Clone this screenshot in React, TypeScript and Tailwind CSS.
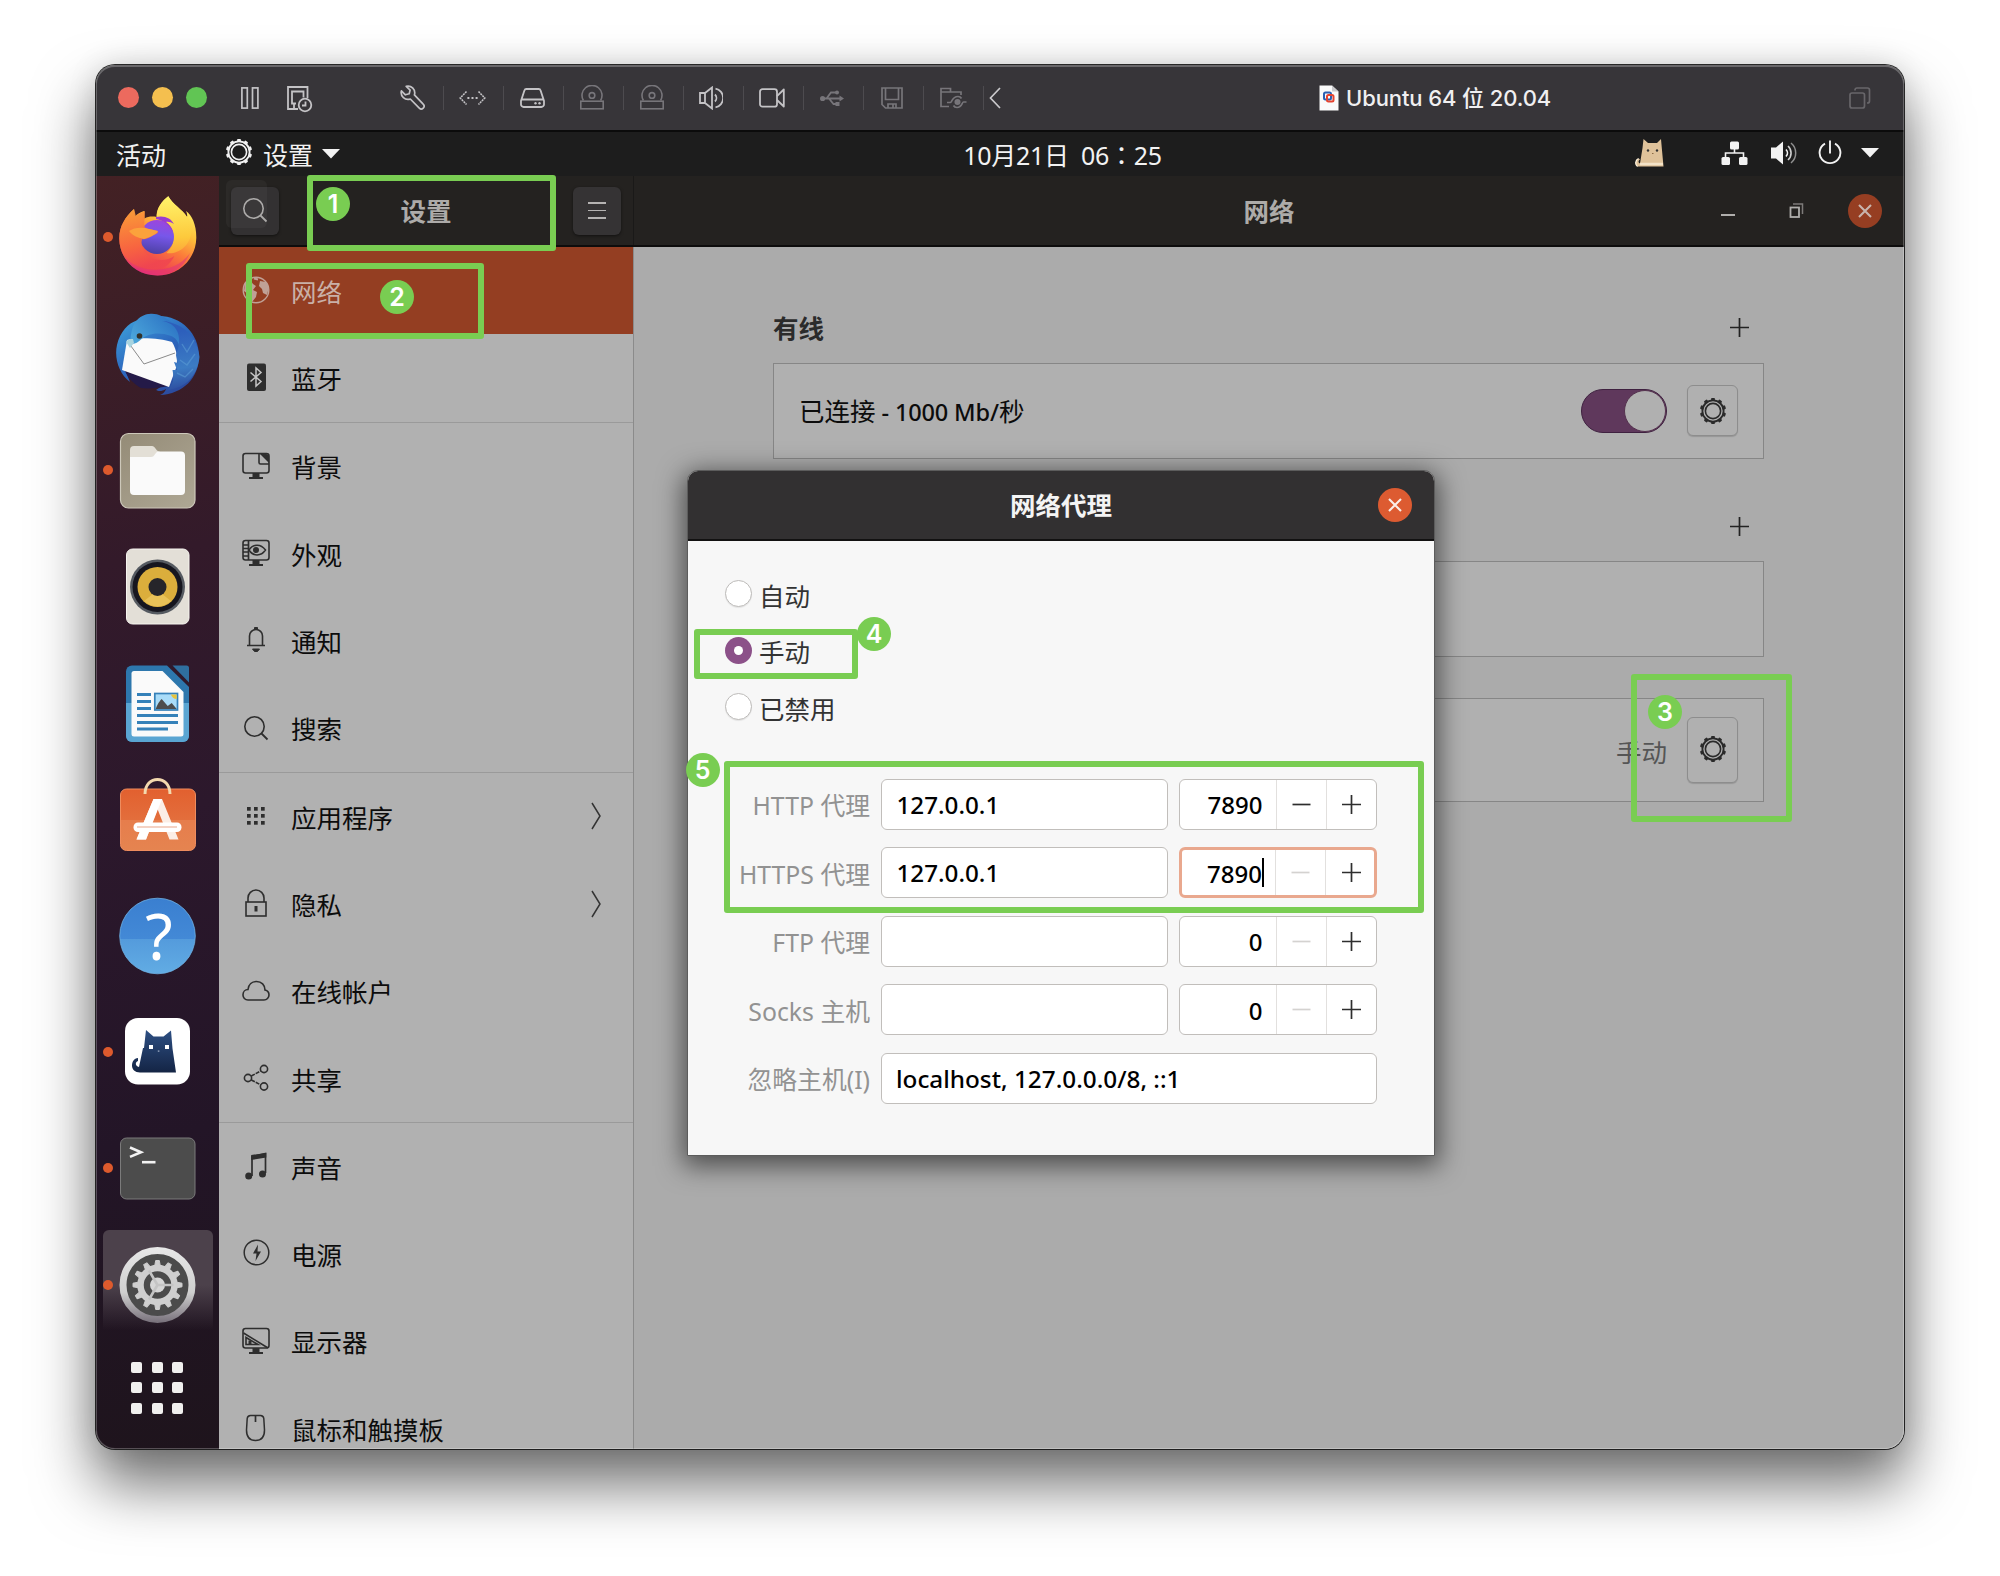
import React from 'react';

type SvgProps = { w: number; h: number; vb?: string; className?: string; children: React.ReactNode };

const Svg = ({ w, h, vb, className = '', children }: SvgProps) => (
  <svg width={w} height={h} viewBox={vb ?? `0 0 ${w} ${h}`} fill="none" className={`shrink-0 ${className}`}>
    {children}
  </svg>
);

/* ---------- shared glyphs ---------- */

const teeth = [0, 1, 2, 3, 4, 5, 6, 7, 8, 9];

const Gear = ({ color }: { color: string }) => (
  <Svg w={28} h={28}>
    <g stroke={color} strokeWidth="1.6">
      <circle cx="14" cy="14" r="7.6" />
      <circle cx="14" cy="14" r="10.6" strokeWidth="1.8" />
    </g>
    {teeth.map((i) => (
      <rect key={i} x="12.1" y="0.9" width="3.8" height="2.8" rx="0.8" fill={color} transform={`rotate(${i * 36} 14 14)`} />
    ))}
  </Svg>
);

const Plus = ({ color = '#222', size = 19 }: { color?: string; size?: number }) => (
  <Svg w={size} h={size} vb="0 0 19 19">
    <path d="M9.5 0v19M0 9.5h19" stroke={color} strokeWidth="1.7" />
  </Svg>
);

const Minus = ({ color }: { color: string }) => (
  <Svg w={19} h={19}>
    <path d="M0.5 9.5h18" stroke={color} strokeWidth="1.7" />
  </Svg>
);

const Cross = ({ color }: { color: string }) => (
  <Svg w={14} h={14}>
    <path d="M1 1l12 12M13 1L1 13" stroke={color} strokeWidth="2.1" />
  </Svg>
);

/* ---------- VM toolbar ---------- */

const Disc = () => (
  <Svg w={24} h={25}>
    <g stroke="#77757a" strokeWidth="1.6">
      <path d="M3.4 15.5A10 10 0 1 1 20.6 15.5" />
      <circle cx="12" cy="10.4" r="2.8" />
      <rect x="0.8" y="16.2" width="22.4" height="7.6" />
    </g>
  </Svg>
);

const toolbar: React.ReactNode[] = [
  <Svg w={25} h={25}>
    <path
      d="M6.2 1.3a6.8 6.8 0 0 1 8.2 8.6l8.8 9.3a2.7 2.7 0 0 1-3.9 3.9l-9-9.1A6.8 6.8 0 0 1 1.4 5.9l4 3.9 3.8-1 .9-3.7z"
      stroke="#c4c3c6"
      strokeWidth="1.7"
      strokeLinejoin="round"
    />
  </Svg>,
  <Svg w={27} h={16} className="ml-px">
    <path d="M7.5 1.5L1.2 8l6.3 6.5M19.5 1.5L25.8 8l-6.3 6.5" stroke="#c4c3c6" strokeWidth="1.6" strokeDasharray="2 .8" />
    <path d="M8.4 8h2M12.5 8h2M16.6 8h2" stroke="#c4c3c6" strokeWidth="2" />
  </Svg>,
  <Svg w={25} h={20}>
    <path d="M6.3 1h12.4a2 2 0 0 1 1.9 1.4L24 13v3.4a2.6 2.6 0 0 1-2.6 2.6H3.6A2.6 2.6 0 0 1 1 16.400V13L4.400 2.400A2 2 0 0 1 6.300 1zM1.500 11.500h22" stroke="#c4c3c6" strokeWidth="1.8" />
    <circle cx="15.500" cy="15.300" r="1.200" fill="#c4c3c6" />
    <circle cx="19.500" cy="15.300" r="1.200" fill="#c4c3c6" />
  </Svg>,
  <Disc />,
  <Disc />,
  <Svg w={24} h={24} className="-ml-[3px]">
    <g stroke="#c4c3c6" strokeWidth="1.8">
      <path d="M1 7h5v10H1zM6 7l7-5.500v21L6 17" />
      <path d="M16 8.500a5 5 0 0 1 0 7M16.500 2.600a9.600 9.600 0 0 1 0 18.800" />
    </g>
  </Svg>,
  <Svg w={26} h={20}>
    <g stroke="#c4c3c6" strokeWidth="1.800" strokeLinejoin="round">
      <rect x="1" y="1.200" width="17" height="17.500" rx="2.500" />
      <path d="M18 8.200L24.800 1.500v17L18 12" />
    </g>
  </Svg>,
  <Svg w={24} h={18}>
    <g stroke="#77757a" strokeWidth="1.800">
      <path d="M2 9.500h19M6.500 9.500L11 3.500h5M9 9.500l4.500 5.500h4" />
    </g>
    <circle cx="2.600" cy="9.500" r="2.600" fill="#77757a" />
    <path d="M19.500 6.500l4.500 3-4.500 3z" fill="#77757a" />
    <circle cx="17" cy="3.500" r="2" fill="#77757a" />
    <rect x="15.500" y="13" width="4" height="4" fill="#77757a" />
  </Svg>,
  <Svg w={22} h={22}>
    <g stroke="#77757a" strokeWidth="1.700">
      <path d="M1 1h20v20H4.500L1 17.500z" />
      <path d="M4.500 1v11.500h13V1M7 21v-4h8v4M12 17v4" />
    </g>
  </Svg>,
  <Svg w={27} h={22} className="ml-[3px]">
    <g stroke="#77757a" strokeWidth="1.700">
      <path d="M9 19.500H1V1.500h9.500V5H21v3M1 5h10" />
      <path d="M7 15.500h3.500c1.500 0 1.500-6 7.500-6 2 0 3 1 3.500 2M26.500 15h-3c-1.500 0-1.500 5.500-6.500 5.500-2 0-3-1-3.500-2" />
      <circle cx="17.500" cy="15" r="2.200" fill="#77757a" />
    </g>
  </Svg>,
];

const TitleBar = () => (
  <div className="flex h-[67px] shrink-0 items-center border-b-2 border-[#0b0b0b] bg-[#373539] pl-[22px]">
    <div className="flex gap-[13px]">
      <span className="size-[21px] rounded-full bg-[#ec6a5e]" />
      <span className="size-[21px] rounded-full bg-[#f4bf4f]" />
      <span className="size-[21px] rounded-full bg-[#61c554]" />
    </div>
    <Svg w={18} h={22} className="ml-[34px]">
      <g stroke="#c4c3c6" strokeWidth="1.700">
        <rect x="0.900" y="0.900" width="5.400" height="20.200" />
        <rect x="11.500" y="0.900" width="5.400" height="20.200" />
      </g>
    </Svg>
    <Svg w={26} h={27} className="mt-[3px] ml-[28px]">
      <g stroke="#c4c3c6" strokeWidth="1.800">
        <path d="M11 23H1V1h19.500v11" />
        <path d="M9 17.500H5V5.500h11.500v6M7 17.500V22.500" />
        <circle cx="18" cy="19" r="6.300" />
        <path d="M18.500 15.500V19.500h-3.500" />
      </g>
    </Svg>
    <div className="ml-[71px] flex">
      {toolbar.map((icon, i) => (
        <div key={i} className="flex h-[24px] w-[60px] items-center justify-center border-r border-[#4d4b4f] pr-[3px]">
          {icon}
        </div>
      ))}
    </div>
    <Svg w={12} h={22} className="ml-[5px]">
      <path d="M11 1L1.500 11 11 21" stroke="#c9c8cb" strokeWidth="1.700" />
    </Svg>
    <Svg w={20} h={26} className="ml-[318px]">
      <path d="M0.500 0.500h12.500l6.500 6v19H.5z" fill="#fafafa" />
      <path d="M13 .5l6.500 6H13z" fill="#c9c9cc" />
      <rect x="5" y="7.500" width="7" height="7" rx="1.500" stroke="#2c5fb0" strokeWidth="2" />
      <rect x="8" y="10" width="6.500" height="6.500" rx="1.500" stroke="#e5432f" strokeWidth="2" />
    </Svg>
    <span className="ml-[7px] w-[206px] whitespace-nowrap pt-px font-[Inter,'Noto_Sans_CJK_SC',sans-serif] text-[22px] font-medium tracking-[-0.100px] text-[#f0eff1]">
      Ubuntu 64 位 20.04
    </span>
    <Svg w={22} h={22} className="ml-[297px]">
      <g stroke="#68666a" strokeWidth="1.700">
        <rect x="1" y="6" width="14.500" height="15" rx="2" />
        <path d="M6 3.500V3a2 2 0 0 1 2-2h10.500a2 2 0 0 1 2 2v11a2 2 0 0 1-2 2h-.5" />
      </g>
    </Svg>
  </div>
);

const Caret = () => (
  <Svg w={18} h={10}>
    <path d="M0 0h18L9 9.500z" fill="#f2f2f2" />
  </Svg>
);

const TopBar = () => (
  <div className="grid h-[44px] shrink-0 grid-cols-[1fr_auto_1fr] items-center bg-[#1d1d1d] text-[25px] text-[#f2f2f2]">
    <div className="flex items-center">
      <span className="ml-[20px] pt-[3px]">活动</span>
      <div className="ml-[59px] -mt-[4px]">
        <Gear color="#f2f2f2" />
      </div>
      <span className="ml-[10px] pt-[3px]">设置</span>
      <div className="ml-[9px]">
        <Caret />
      </div>
    </div>
    <div className="ml-[125px] whitespace-pre pt-[1px] text-[25px] tracking-[-0.300px]">
      10月21日  06<span className="font-['Noto_Sans_CJK_TC',sans-serif]" lang="zh-TW">：</span>25
    </div>
    <div className="flex items-center justify-end pr-[25px] pb-[3px]">
      <Svg w={30} h={30}>
        <path d="M8.500 1l4.500 4h9l4-4 .8 9 1.700 18.500H2.500C0 27 0 22 3.500 20.500l1.500.8C3 23 3 25 5 25.500L7.500 10z" fill="#dfc29a" />
        <path d="M2.500 28.500C0 27 0 22 3.500 20.500" stroke="#fff4df" strokeWidth="1.300" />
        <path d="M5 26h23" stroke="#f3e3c8" strokeWidth="2.500" />
        <circle cx="13" cy="12.500" r="1.200" fill="#333" />
        <circle cx="22" cy="12.500" r="1.200" fill="#333" />
        <path d="M17 15.500h1.500" stroke="#8a6a44" />
      </Svg>
      <Svg w={27} h={24} className="ml-[56px]">
        <g fill="#f2f2f2">
          <rect x="9" y="0.500" width="9" height="8" rx="1.500" />
          <rect x="0.500" y="16" width="8.500" height="8" rx="1.500" />
          <rect x="18" y="16" width="8.500" height="8" rx="1.500" />
        </g>
        <path d="M13.500 8v4M4.500 17v-5h18v5" stroke="#f2f2f2" strokeWidth="1.600" />
      </Svg>
      <Svg w={26} h={24} className="ml-[23px]">
        <path d="M0 6.500h5L12 .5v23L5 17.500H0z" fill="#f2f2f2" />
        <path d="M15 8.500a5 5 0 0 1 0 7" stroke="#f2f2f2" strokeWidth="1.700" />
        <path d="M17 5a9.500 9.500 0 0 1 0 14" stroke="#cfcfcf" strokeWidth="1.600" />
        <path d="M20 2a13 13 0 0 1 0 20" stroke="#8f8f8f" strokeWidth="1.500" />
      </Svg>
      <Svg w={24} h={25} className="ml-[21px]">
        <path d="M12 .5v13" stroke="#f2f2f2" strokeWidth="1.900" />
        <path d="M7 3.600a10.400 10.400 0 1 0 10 0" stroke="#f2f2f2" strokeWidth="1.900" />
      </Svg>
      <div className="ml-[19px]">
        <Caret />
      </div>
    </div>
  </div>
);

/* ---------- Dock ---------- */

const Firefox = () => (
  <Svg w={84} h={84}>
    <defs>
      <linearGradient id="ffBody" x1="66" y1="8" x2="24" y2="80" gradientUnits="userSpaceOnUse">
        <stop offset="0" stopColor="#fff265" />
        <stop offset=".3" stopColor="#fdc03a" />
        <stop offset=".55" stopColor="#fb7a3a" />
        <stop offset=".8" stopColor="#f0464f" />
        <stop offset="1" stopColor="#dd2b7d" />
      </linearGradient>
      <linearGradient id="ffOrb" x1="44" y1="20" x2="38" y2="60" gradientUnits="userSpaceOnUse">
        <stop offset="0" stopColor="#a93fd8" />
        <stop offset=".5" stopColor="#7757ea" />
        <stop offset="1" stopColor="#4a3fa0" />
      </linearGradient>
      <linearGradient id="ffHead" x1="14" y1="18" x2="34" y2="70" gradientUnits="userSpaceOnUse">
        <stop offset="0" stopColor="#f99638" />
        <stop offset=".6" stopColor="#f8673f" />
        <stop offset="1" stopColor="#f0464f" />
      </linearGradient>
      <linearGradient id="ffFlame" x1="56" y1="2" x2="60" y2="70" gradientUnits="userSpaceOnUse">
        <stop offset="0" stopColor="#fff36a" />
        <stop offset=".6" stopColor="#fdc93c" />
        <stop offset="1" stopColor="#fb8b38" />
      </linearGradient>
    </defs>
    <path d="M18 14C9 22 3 32 3.300 44 4 66 21 80.500 41.500 80.500 64 80.500 80 63 80.300 43 80.500 30 76 20 70 16c1 2 1.500 4 1 6C66 14 57 10 52.300 1.300 46 6 40 14 40.700 22 36 21 32 21.500 28.500 23.500L28 16c-3.500 1-7 3-9 5.500z" fill="url(#ffBody)" />
    <path d="M52.300 1.300C46 6 40 14 40.700 23 50 24 58 32 57.500 43c-.5 7-3 11-7 15 10 2 24-6 25-22 .3-6-1.500-11-4.500-14C66 14 57 10 52.300 1.300z" fill="url(#ffFlame)" />
    <circle cx="41" cy="42" r="17" fill="url(#ffOrb)" />
    <path d="M40 22c8-2 15 1 18 7-3-2-6-2.500-8-2 4 3 6 6 7 10C52 28 46 25 40 24z" fill="#9a3bd0" />
    <path d="M18 14C9 22 3 32 3.300 44c0 8 3 16 8 22 6 8 20 12 30 9 8-2 14-7 17-14-8 6-22 5-28-2-4-5-6-10-4-15 4 1 8-2 11-4 2-1 4-1 5-3-2-2-6-2-9-3-3 0-6-2-5-6l.7-12c-3.500 1-7 3-9 5.500z" fill="url(#ffHead)" opacity=".9" />
    <path d="M13 36c4-3 10-4 16-3 4 1 9 2 13 3-2 4-8 6-14 8-6-1-11-3-15-8z" fill="#fba23c" />
    <path d="M8 60c10 18 50 22 66-2-6 15-19 22.500-32.500 22.500C25 80.500 13 72 8 60z" fill="#e2337a" opacity=".55" />
  </Svg>
);

const Thunderbird = () => (
  <Svg w={84} h={84}>
    <defs>
      <linearGradient id="tbBody" x1="20" y1="4" x2="70" y2="80" gradientUnits="userSpaceOnUse">
        <stop offset="0" stopColor="#3c9ad8" />
        <stop offset=".45" stopColor="#2c66bd" />
        <stop offset="1" stopColor="#2b479a" />
      </linearGradient>
      <linearGradient id="tbHead" x1="20" y1="30" x2="50" y2="4" gradientUnits="userSpaceOnUse">
        <stop offset="0" stopColor="#4aa4da" />
        <stop offset="1" stopColor="#2f78c6" />
      </linearGradient>
      <linearGradient id="tbWing" x1="60" y1="20" x2="70" y2="80" gradientUnits="userSpaceOnUse">
        <stop offset="0" stopColor="#2d5fbc" />
        <stop offset=".6" stopColor="#3c7cc4" />
        <stop offset="1" stopColor="#2b479a" />
      </linearGradient>
    </defs>
    <path d="M33 2l4 2.500C62 1 83 20 83 44c0 22-16 38-39 39 3-1 5-3 6-6-5 3-8 2-10 1l12-8L9 58l5 12C3 62-2 46 1 33 4 20 12 11 22 8c3-3 7-5 11-6z" fill="url(#tbBody)" />
    <path d="M9 59l44 15c-10 2-20 3-28 2C18 72 12 66 9 59z" fill="#241a48" />
    <path d="M11 28c10-3 34-2 45 2 5 8 6 17 4 26L53 75 6 58z" fill="#fafafa" />
    <path d="M12 30l16 22 31-11" stroke="#8a8a8a" strokeWidth="1" />
    <path d="M33 2c-9 1-14 7-16.500 14-1 4-2.500 9-2 16 5 0 8-2 11-5 6-5 16-8 30-3 6 3 8 8 8 14 4-12 0-22-8-28C47 4 41 1 33 2z" fill="url(#tbHead)" />
    <path d="M10 30c2-3 4-3 7-3l1 4-4 5z" fill="#a8d4e0" />
    <circle cx="23.500" cy="24" r="2.800" fill="#33322a" />
    <path d="M46 9c14 2 22 14 14 34l1.500 8-3.500-1 3 8-4.500 0c2 10 0 15-5 20 18-2 30-14 32-33-1-12-8-25-20-31-6-3-12-5-17.500-5z" fill="url(#tbWing)" />
    <path d="M66 32l5 8 7-12M64 48l7 5 8-11M61 61l8 4 8-8" stroke="#5a9bd4" strokeWidth="1.400" opacity=".6" />
  </Svg>
);

const Files = () => (
  <Svg w={84} h={84}>
    <defs>
      <linearGradient id="flBg" x1="10" y1="6" x2="70" y2="80" gradientUnits="userSpaceOnUse">
        <stop offset="0" stopColor="#958c78" />
        <stop offset="1" stopColor="#ada693" />
      </linearGradient>
    </defs>
    <rect x="4.500" y="5.500" width="74.500" height="74.500" rx="8" fill="url(#flBg)" stroke="#cdc8ba" strokeWidth="1.200" />
    <path d="M14 36V22a4 4 0 0 1 4-4h18c3 0 4 5 7 5.500l26 12z" fill="#e3dfd6" />
    <path d="M14 29h21c4 0 4-5.500 8-5.500h22a4 4 0 0 1 4 4V63a4 4 0 0 1-4 4H18a4 4 0 0 1-4-4z" fill="#fafafa" />
  </Svg>
);

const Rhythmbox = () => (
  <Svg w={84} h={84}>
    <rect x="10.500" y="5" width="62.500" height="75" rx="6" fill="#e3dfd7" stroke="#f6f4ef" strokeWidth="1" />
    <circle cx="41.500" cy="43" r="27.500" fill="#555a61" />
    <circle cx="41.500" cy="43" r="25" fill="#16161f" />
    <circle cx="41.500" cy="43" r="20" fill="#dbae3c" />
    <path d="M28 57a19.500 19.500 0 0 0 27 0l-9-7h-9z" fill="#f0cb64" opacity=".7" />
    <circle cx="41.500" cy="43" r="9" fill="#26252a" />
  </Svg>
);

const Writer = () => (
  <Svg w={84} h={84}>
    <path d="M16 4.500h35L73 26v49a6 6 0 0 1-6 6H16a6 6 0 0 1-6-6V10.500a6 6 0 0 1 6-6z" fill="#2d77ad" />
    <path d="M10 42h63v33a6 6 0 0 1-6 6H16a6 6 0 0 1-6-6z" fill="#5aa5d2" />
    <path d="M56.500 4.500h14a2.500 2.500 0 0 1 2.500 2.500v14.500z" fill="#2f6f9f" />
    <path d="M18 10h28.500L67.500 31v42a2.500 2.500 0 0 1-2.500 2.500H18a2.500 2.500 0 0 1-2.500-2.500V12.500A2.500 2.500 0 0 1 18 10z" fill="#fafafa" />
    <path d="M21 33.500h14M21 40.500h14M21 47.500h14M21 54.500h41M21 61.500h41M21 68h31" stroke="#3581b9" strokeWidth="3" />
    <rect x="38.800" y="32.500" width="22.700" height="16.500" fill="#a9dcf8" stroke="#3581b9" strokeWidth="1.700" />
    <path d="M39.700 48c2-5 3-7 6-10l6 7 4-3 5 6z" fill="#4d4d4d" />
    <path d="M55 33.400h5.700v4.600c-3 0-5-2-5.700-4.600z" fill="#e8c33c" />
  </Svg>
);

const Software = () => (
  <Svg w={84} h={84}>
    <defs>
      <linearGradient id="swBg" x1="0" y1="12" x2="0" y2="74" gradientUnits="userSpaceOnUse">
        <stop offset="0" stopColor="#e2602f" />
        <stop offset=".5" stopColor="#e36e3c" />
        <stop offset=".5" stopColor="#e67d4c" />
        <stop offset="1" stopColor="#e58450" />
      </linearGradient>
    </defs>
    <rect x="4.500" y="12" width="75" height="61.500" rx="6" fill="url(#swBg)" stroke="#ee8c5e" strokeWidth="1" />
    <path d="M29 17C29 -2.500 54 -2.500 54 17" stroke="#f3d9ae" strokeWidth="3" />
    <path d="M37.500 22h8.500l16.500 40.500H53.500L41.500 32 30 62.500H20.500z" fill="#fbeee6" />
    <path d="M37.500 22h8.500L30 62.500H20.500z" fill="#fff" />
    <rect x="17.500" y="45.500" width="48" height="9.500" rx="4.500" fill="#fff" />
    <path d="M21 50h40" stroke="#e9a58a" strokeWidth="1.200" />
  </Svg>
);

const Help = () => (
  <Svg w={84} h={84}>
    <defs>
      <linearGradient id="hpBg" x1="0" y1="4" x2="0" y2="81" gradientUnits="userSpaceOnUse">
        <stop offset="0" stopColor="#3a7fd0" />
        <stop offset=".53" stopColor="#4389d6" />
        <stop offset=".53" stopColor="#549bdc" />
        <stop offset="1" stopColor="#62ade4" />
      </linearGradient>
    </defs>
    <circle cx="41.500" cy="42" r="37.800" fill="url(#hpBg)" stroke="#6fb2e6" strokeWidth="0.800" />
    <text x="43" y="66" textAnchor="middle" fontSize="63" fill="#fff" fontFamily="Noto Sans">?</text>
  </Svg>
);

const Clash = () => (
  <Svg w={84} h={84}>
    <defs>
      <linearGradient id="clCat" x1="0" y1="20" x2="0" y2="63" gradientUnits="userSpaceOnUse">
        <stop offset="0" stopColor="#2d4f83" />
        <stop offset="1" stopColor="#142444" />
      </linearGradient>
    </defs>
    <rect x="9" y="8" width="65" height="66.500" rx="13" fill="#fff" />
    <path d="M30 20l7.500 6.500h10L55 20.500l1.500 18 3.500 24H24c-5 0-8-3-8-7 0-4 2-7 6-7.500v3c-3 1-3 5 1 6l4-19h1z" fill="url(#clCat)" />
    <rect x="33" y="35" width="4" height="4" fill="#fff" />
    <rect x="49" y="35" width="4" height="4" fill="#fff" />
    <rect x="41.800" y="40.500" width="1.600" height="1.200" fill="#a9b6cc" />
  </Svg>
);

const Terminal = () => (
  <Svg w={84} h={84}>
    <rect x="4.500" y="12" width="74.500" height="61" rx="6" fill="#4c4c4c" stroke="#7b7b7b" strokeWidth="1" />
    <path d="M14 21.500l11 4.700-11 4.700" stroke="#f2f2f2" strokeWidth="2.600" />
    <path d="M26 36.200h13.500" stroke="#f2f2f2" strokeWidth="2.600" />
  </Svg>
);

const cogTeeth = [0, 1, 2, 3, 4, 5, 6, 7, 8, 9, 10, 11];

const SettingsIcon = () => (
  <Svg w={84} h={84}>
    <defs>
      <linearGradient id="stRing" x1="0" y1="4" x2="0" y2="80" gradientUnits="userSpaceOnUse">
        <stop offset="0" stopColor="#e8e8e8" />
        <stop offset=".6" stopColor="#cfcfcf" />
        <stop offset="1" stopColor="#77707a" />
      </linearGradient>
    </defs>
    <circle cx="41.500" cy="42" r="34.500" fill="#4b4b4b" stroke="url(#stRing)" strokeWidth="7" />
    {cogTeeth.map((i) => (
      <path key={i} d="M38.500 24l1.200-6.500h3.600L44.500 24z" fill="#cfcfcf" stroke="#cfcfcf" strokeLinejoin="round" transform={`rotate(${i * 30} 41.5 42)`} />
    ))}
    <circle cx="41.500" cy="42" r="17" stroke="#cfcfcf" strokeWidth="6.500" />
    <circle cx="41.500" cy="42" r="7.500" fill="#d6d6d6" />
    <path d="M41.500 42h16M41.500 42l-8.500-14.500M41.500 42L33 56.500" stroke="#c4c4c4" strokeWidth="2.600" />
  </Svg>
);

const dock = [
  { icon: <Firefox />, dot: true },
  { icon: <Thunderbird /> },
  { icon: <Files />, dot: true },
  { icon: <Rhythmbox /> },
  { icon: <Writer /> },
  { icon: <Software /> },
  { icon: <Help /> },
  { icon: <Clash />, dot: true },
  { icon: <Terminal />, dot: true },
  { icon: <SettingsIcon />, dot: true, active: true },
];

const Dock = () => (
  <div className="flex w-[123px] shrink-0 flex-col bg-[linear-gradient(168deg,#432124_0%,#331a2a_30%,#2c182c_50%,#231527_75%,#1e141c_100%)] pt-[3px]">
    {dock.map((item, i) => (
      <div key={i} className="flex h-[116.4px] items-center">
        <div
          className={
            item.active
              ? '-mt-[10px] ml-[6.500px] flex h-[100px] w-[110px] items-center rounded-t-md bg-linear-to-b from-[#4c414b] from-55% to-transparent pt-[10px]'
              : 'ml-[6.500px] flex w-[110px] items-center'
          }
        >
          <span className={item.dot ? 'size-[10px] shrink-0 rounded-full bg-[#dd5a2d]' : 'size-[10px] shrink-0'} />
          <div className="ml-[3px]">{item.icon}</div>
        </div>
      </div>
    ))}
    <div className="mt-[19px] mr-px grid grid-cols-[repeat(3,11px)] gap-[9.500px] self-center">
      {[0, 1, 2, 3, 4, 5, 6, 7, 8].map((i) => (
        <span key={i} className="size-[11px] rounded-[2px] bg-[#f0efee]" />
      ))}
    </div>
  </div>
);

/* ---------- Settings sidebar ---------- */

const ink = '#2e2e2e';

const Monitor = ({ children }: { children: React.ReactNode }) => (
  <Svg w={28} h={28}>
    <rect x="1" y="1.500" width="26" height="19.500" rx="2.500" stroke={ink} strokeWidth="1.600" />
    <path d="M10.500 21h7v4h3.500v2H7v-2h3.500z" fill={ink} />
    {children}
  </Svg>
);

const Magnifier = ({ color }: { color: string }) => (
  <Svg w={28} h={28}>
    <circle cx="12.500" cy="12.500" r="9.700" stroke={color} strokeWidth="1.600" />
    <path d="M19.500 19.500l6 6" stroke={color} strokeWidth="1.800" />
  </Svg>
);

type Item = { label: string; icon: React.ReactNode; active?: boolean; more?: boolean };

const groups: Item[][] = [
  [
    {
      label: '网络',
      active: true,
      icon: (
        <Svg w={28} h={28}>
          <circle cx="14" cy="14" r="12.800" stroke="#c0a196" strokeWidth="1.400" />
          <path d="M3 6l6-1 2 3 3 2-3 4 4 2-1 5-4 5-3-7-5-4zM18 5l6 1 3 5-2 8-4-2-1-4-3-3z" fill="#c0a196" />
          <path d="M12 2.500l4 1" stroke="#c0a196" strokeWidth="2" />
        </Svg>
      ),
    },
    {
      label: '蓝牙',
      icon: (
        <Svg w={28} h={28}>
          <rect x="5" y="0.500" width="19" height="27.500" rx="2" fill={ink} />
          <path d="M8.500 9.500l10.500 9-5 4.500V5l5 4.500-10.500 9" stroke="#c4c4c4" strokeWidth="1.500" />
        </Svg>
      ),
    },
  ],
  [
    {
      label: '背景',
      icon: (
        <Monitor>
          <path d="M17 2v8.500a1.500 1.500 0 0 0 1.500 1.500H27" stroke={ink} strokeWidth="1.600" />
          <path d="M18 2h6a3 3 0 0 1 3 3v6z" fill={ink} />
        </Monitor>
      ),
    },
    {
      label: '外观',
      icon: (
        <Monitor>
          <path d="M6.500 2v19M1 6h5.500M1 9.500h5.500M1 13h5.500M1 17h5.500" stroke={ink} strokeWidth="1.700" />
          <path d="M7 11c4-6.500 12-6.500 16.500 0-4.500 6.500-12.500 6.500-16.500 0z" stroke={ink} strokeWidth="1.500" />
          <circle cx="14" cy="11" r="3" fill={ink} />
        </Monitor>
      ),
    },
    {
      label: '通知',
      icon: (
        <Svg w={28} h={28}>
          <path d="M7.500 19.500V10a6.500 6.500 0 0 1 13 0v9.500M5 19.500h18" stroke={ink} strokeWidth="1.600" />
          <path d="M12.500 3.500V1.500h3v2M10.500 23h7l-2 2.500h-3z" fill={ink} stroke={ink} />
        </Svg>
      ),
    },
    { label: '搜索', icon: <Magnifier color={ink} /> },
  ],
  [
    {
      label: '应用程序',
      more: true,
      icon: (
        <Svg w={28} h={28}>
          {[5, 12, 19].map((y) => [5, 12, 19].map((x) => <rect key={`${x}-${y}`} x={x} y={y} width="3.700" height="3.700" fill={ink} />))}
        </Svg>
      ),
    },
    {
      label: '隐私',
      more: true,
      icon: (
        <Svg w={28} h={28}>
          <rect x="4" y="13" width="20" height="14" stroke={ink} strokeWidth="1.600" />
          <path d="M6 13V9a8 8 0 0 1 16 0v4" stroke={ink} strokeWidth="1.600" />
          <rect x="12.500" y="17" width="3" height="5.500" fill={ink} />
        </Svg>
      ),
    },
    {
      label: '在线帐户',
      icon: (
        <Svg w={28} h={28}>
          <path d="M6 23a5 5 0 0 1-5-5.300c0-3 2.200-5.200 5-5.200C6.500 7.500 10 4.500 14.500 4.500c5 0 8.500 3.500 8.500 8.500 2.500.5 4 2.500 4 5a5 5 0 0 1-5 5z" stroke={ink} strokeWidth="1.600" />
        </Svg>
      ),
    },
    {
      label: '共享',
      icon: (
        <Svg w={28} h={28}>
          <g stroke={ink} strokeWidth="1.600">
            <circle cx="6" cy="14" r="3.600" />
            <circle cx="22" cy="5" r="3.600" />
            <circle cx="22" cy="22.500" r="3.600" />
            <path d="M9.300 12l9.300-5M9.300 16l9.300 4.800" strokeDasharray="4 1" />
          </g>
        </Svg>
      ),
    },
  ],
  [
    {
      label: '声音',
      icon: (
        <Svg w={28} h={28}>
          <path d="M10 24V4.500l13.500-3V21" stroke={ink} strokeWidth="1.700" />
          <path d="M9.200 3L24.300 1v4.500L9.200 8z" fill={ink} />
          <circle cx="6.700" cy="24" r="3.500" fill={ink} />
          <circle cx="20.500" cy="22" r="3.500" fill={ink} />
        </Svg>
      ),
    },
    {
      label: '电源',
      icon: (
        <Svg w={28} h={28}>
          <circle cx="14.500" cy="13.500" r="12.300" stroke={ink} strokeWidth="1.500" />
          <path d="M16 5.500l-5 9h3.500L13.500 22l5.500-9.500h-3.500z" fill={ink} />
        </Svg>
      ),
    },
    {
      label: '显示器',
      icon: (
        <Monitor>
          <path d="M1.500 6L26 21M4 10.500l0 7h12z" stroke={ink} strokeWidth="1.600" />
          <path d="M6.500 13.500h3v4h-3z" fill={ink} />
        </Monitor>
      ),
    },
    {
      label: '鼠标和触摸板',
      icon: (
        <Svg w={28} h={28}>
          <path d="M8.500 1.500h10a3.500 3.500 0 0 1 3.300 3L22.500 16c0 7-3.500 10.500-9 10.500S4.500 23 4.500 16L5.200 4.500a3.500 3.500 0 0 1 3.300-3z" stroke={ink} strokeWidth="1.500" />
          <path d="M13.500 1v7" stroke={ink} strokeWidth="1.700" />
        </Svg>
      ),
    },
  ],
];

const Sidebar = () => (
  <div className="flex w-[415px] shrink-0 flex-col overflow-hidden border-r-[1.500px] border-[#8b8b8b] bg-[#b1b1b1]">
    {groups.map((group, g) => (
      <div key={g} className={g < 3 ? 'border-b border-[#9a9a9a]' : ''}>
        {group.map((item) => (
          <div
            key={item.label}
            className={
              item.active
                ? 'flex h-[87.300px] items-center bg-[#943e22] pl-[23px] text-[25.500px] text-[#c9b0a7]'
                : 'flex h-[87.300px] items-center pl-[23px] text-[25.500px] text-[#0c0c0c]'
            }
          >
            <div className="-mt-[1px]">{item.icon}</div>
            <span className="ml-[21px] flex-1 whitespace-nowrap pt-[4px]">{item.label}</span>
            {item.more && (
              <Svg w={10} h={28} className="mr-[32px]">
                <path d="M1 1l8 13-8 13" stroke="#333" strokeWidth="1.500" />
              </Svg>
            )}
          </div>
        ))}
      </div>
    ))}
  </div>
);

/* ---------- Settings content ---------- */

const HeaderBar = () => (
  <div className="flex h-[71px] shrink-0 border-b-2 border-[#0d0c0c] bg-[#242220] text-[25.500px] font-bold text-[#adaba9]">
    <div className="flex w-[415px] items-center justify-between border-r border-[#1a1918] px-[12px]">
      <div className="relative flex size-[48px] items-center justify-center rounded-md bg-[#333132] pr-px pb-[2px] shadow-[0_1px_3px_rgba(0,0,0,0.5)]">
        <Magnifier color="#a9a7a6" />
        <span className="absolute -top-[7px] -left-[5px] h-[48px] w-[41px] rounded-md bg-white/[0.035]" />
      </div>
      <span className="pt-[3px]">设置</span>
      <div className="flex size-[48px] flex-col items-center justify-center gap-[5.500px] rounded-md bg-[#353334] shadow-[0_1px_3px_rgba(0,0,0,0.5)]">
        <span className="h-[1.700px] w-[18px] bg-[#b5b3b2]" />
        <span className="h-[1.700px] w-[18px] bg-[#b5b3b2]" />
        <span className="h-[1.700px] w-[18px] bg-[#b5b3b2]" />
      </div>
    </div>
    <div className="grid flex-1 grid-cols-[1fr_auto_1fr] items-center">
      <span />
      <span className="pt-[3px]">网络</span>
      <div className="flex items-center justify-end pr-[22px]">
        <span className="mt-[8px] h-[2px] w-[14px] bg-[#b0aeac]" />
        <Svg w={15} h={15} className="ml-[54px]">
          <rect x="1.500" y="4.500" width="8.500" height="9.500" stroke="#b0aeac" strokeWidth="1.800" />
          <path d="M4 1h9.500v10" stroke="#7d7b79" strokeWidth="1.500" />
        </Svg>
        <span className="ml-[44px] flex size-[34px] items-center justify-center rounded-full bg-[#963e22]">
          <Cross color="#c9b5ad" />
        </span>
      </div>
    </div>
  </div>
);

const GearButton = ({ tall = false }: { tall?: boolean }) => (
  <div
    className={
      tall
        ? 'flex h-[66px] w-[51px] items-center justify-center rounded-md border-[1.500px] border-[#8d8d8d] bg-[#b0b0b0] pb-[2px] shadow-[0_1px_1px_rgba(0,0,0,0.15)]'
        : '-mt-[1px] flex h-[51px] w-[51px] items-center justify-center rounded-md border-[1.500px] border-[#8d8d8d] bg-[#b0b0b0] shadow-[0_1px_1px_rgba(0,0,0,0.15)]'
    }
  >
    <Gear color="#2a2a2a" />
  </div>
);

const Content = () => (
  <div className="flex flex-1 flex-col bg-[#ababab] pl-[139px] pr-[140px] text-[25px] text-[#0c0c0c]">
    <div className="mt-[61px] flex h-[40px] items-center justify-between pr-[15.500px]">
      <span className="pt-px text-[25.500px] font-bold text-[#2b2b2b]">有线</span>
      <div className="-mt-[2px]">
        <Plus />
      </div>
    </div>
    <div className="mt-[15px] flex h-[96px] items-center border-[1.500px] border-[#868686] bg-[#b0b0b0] pl-[25px] pr-[25px]">
      <span className="flex-1 whitespace-nowrap pt-px text-[25.500px]">
        已连接<span className="text-[23.500px] font-medium tracking-[-0.130px]"> - 1000 Mb/</span>秒
      </span>
      <div className="-mt-px flex h-[44px] w-[86px] items-center justify-end rounded-full border-[1.500px] border-[#3f2140] bg-[#5f385c]">
        <span className="size-[42px] rounded-full border border-[#55334f] bg-[#b0b0b0]" />
      </div>
      <div className="ml-[20px]">
        <GearButton />
      </div>
    </div>
    <div className="mt-[48px] flex h-[40px] items-center justify-end pr-[15.500px]">
      <div className="-mt-[2px]">
        <Plus />
      </div>
    </div>
    <div className="mt-[14px] h-[96px] border-[1.500px] border-[#868686] bg-[#b0b0b0]" />
    <div className="mt-[41px] flex h-[104px] items-center justify-end border-[1.500px] border-[#868686] bg-[#b0b0b0] pr-[25px]">
      <span className="mt-[5px] text-[25.500px] text-[#555]">手动</span>
      <div className="ml-[20px]">
        <GearButton tall />
      </div>
    </div>
  </div>
);

/* ---------- Proxy dialog ---------- */

const Radio = ({ label, checked = false }: { label: string; checked?: boolean }) => (
  <div className="flex h-[56.500px] items-center text-[25.500px] text-[#333]">
    {checked ? (
      <span className="flex size-[27px] items-center justify-center rounded-full bg-[#8c5189]">
        <span className="size-[9px] rounded-full bg-white" />
      </span>
    ) : (
      <span className="size-[27px] rounded-full border-[1.500px] border-[#bdbbb9] bg-white shadow-[0_1px_1px_rgba(0,0,0,0.08)]" />
    )}
    <span className="ml-[7px] pt-[5px]">{label}</span>
  </div>
);

type Row = { label: string; host: string; port?: string; canDec?: boolean; focus?: boolean };

const rows: Row[] = [
  { label: 'HTTP 代理', host: '127.0.0.1', port: '7890', canDec: true },
  { label: 'HTTPS 代理', host: '127.0.0.1', port: '7890', focus: true },
  { label: 'FTP 代理', host: '', port: '0' },
  { label: 'Socks 主机', host: '', port: '0' },
  { label: '忽略主机(I)', host: 'localhost, 127.0.0.0/8, ::1' },
];

const Dialog = () => (
  <div className="absolute top-[405px] left-[591px] flex h-[686px] w-[748px] flex-col overflow-hidden rounded-t-[11px] border border-[#5c5c5c] bg-[#f7f7f7] shadow-[0_6px_26px_4px_rgba(0,0,0,0.55)]">
    <div className="grid h-[70px] shrink-0 grid-cols-[1fr_auto_1fr] items-center border-b-2 border-[#121111] bg-[#323031]">
      <span />
      <span className="pt-[2px] text-[25.500px] font-bold text-[#f4f4f4]">网络代理</span>
      <span className="mr-[22.500px] -mt-[1px] flex size-[34px] items-center justify-center justify-self-end rounded-full bg-[#dd5b31]">
        <Cross color="#fbeee9" />
      </span>
    </div>
    <div className="mt-[24.500px] ml-[37px] flex flex-col">
      <Radio label="自动" />
      <Radio label="手动" checked />
      <Radio label="已禁用" />
    </div>
    <div className="mt-[43.500px] flex flex-col gap-[17.500px]">
      {rows.map((r) => (
        <div key={r.label} className="flex h-[51px] items-center">
          <span className="w-[182px] whitespace-nowrap pt-[3px] text-right text-[24.800px] text-[#929292]">{r.label}</span>
          <div
            className={
              r.port
                ? 'ml-[11px] flex h-[51px] w-[287px] items-center rounded-md border-[1.500px] border-[#c1bebb] bg-white pl-[14.500px] pt-[2px] text-[24.200px] font-medium text-black'
                : 'ml-[11px] flex h-[51px] w-[496px] items-center rounded-md border-[1.500px] border-[#c1bebb] bg-white pl-[14px] pt-[2px] text-[24.300px] font-medium text-black'
            }
          >
            <span className="whitespace-nowrap">{r.host}</span>
          </div>
          {r.port && (
            <div
              className={
                r.focus
                  ? 'ml-[11px] flex h-[51px] w-[198px] items-stretch rounded-md border-[3px] border-[#e9a88e] bg-white text-[24px] font-medium text-black'
                  : 'ml-[11px] flex h-[51px] w-[198px] items-stretch rounded-md border-[1.500px] border-[#c1bebb] bg-white px-[1.500px] text-[24px] font-medium text-black'
              }
            >
              <div className="flex flex-1 items-center justify-end pt-[2px]">
                <span>{r.port}</span>
                <span className={r.focus ? 'mb-[2px] mr-[11.500px] h-[29px] w-[1.500px] bg-black' : 'mr-[11.500px] w-[1.500px]'} />
              </div>
              <div className="flex w-[50px] items-center justify-center border-l border-[#e2e0de]">
                <Minus color={r.canDec ? '#2e2e2e' : '#d4d2d0'} />
              </div>
              <div className="flex w-[49px] items-center justify-center border-l border-[#e2e0de] pl-[2px]">
                <Plus color="#2e2e2e" />
              </div>
            </div>
          )}
        </div>
      ))}
    </div>
  </div>
);

/* ---------- Annotations ---------- */

const frames = [
  'absolute left-[307px] top-[175px] h-[76px] w-[249px] rounded-[3px] border-[6.500px] border-[#79cd52]',
  'absolute left-[246px] top-[263px] h-[76px] w-[238px] rounded-[3px] border-[6.500px] border-[#79cd52]',
  'absolute left-[1631px] top-[674px] h-[148px] w-[161px] rounded-[3px] border-[6.500px] border-[#79cd52]',
  'absolute left-[694px] top-[629px] h-[50px] w-[164px] rounded-[3px] border-[6.500px] border-[#79cd52]',
  'absolute left-[724px] top-[761px] h-[152px] w-[700px] rounded-[3px] border-[6.500px] border-[#79cd52]',
];

const badges = [
  'left-[316px] top-[187px]',
  'left-[380px] top-[280px]',
  'left-[1648px] top-[695px]',
  'left-[857px] top-[617px]',
  'left-[685.5px] top-[753px]',
];

export default function App() {
  return (
    <div className="relative h-[1576px] w-[2000px] overflow-hidden bg-white font-['Noto_Sans','Noto_Sans_CJK_SC',sans-serif] leading-none">
      <div className="pt-[65px] pl-[96px]">
        <div className="relative flex h-[1384px] w-[1808px] flex-col overflow-hidden rounded-[19px] shadow-[0_0_0_1px_rgba(20,20,20,0.9),0_34px_60px_2px_rgba(0,0,0,0.56),0_0_30px_rgba(0,0,0,0.12)]">
          <TitleBar />
          <TopBar />
          <div className="flex min-h-0 flex-1">
            <Dock />
            <div className="flex min-w-0 flex-1 flex-col">
              <HeaderBar />
              <div className="flex min-h-0 flex-1">
                <Sidebar />
                <Content />
              </div>
            </div>
          </div>
          <Dialog />
          <div className="pointer-events-none absolute inset-0 rounded-[19px] border border-white/25 border-t-2" />
        </div>
      </div>
      {frames.map((f) => (
        <div key={f} className={f} />
      ))}
      {badges.map((b, i) => (
        <span
          key={b}
          className={`absolute flex size-[34px] items-center justify-center rounded-full bg-[#79cd52] font-[Inter,sans-serif] text-[25px] font-semibold text-white ${b}`}
        >
          {i + 1}
        </span>
      ))}
    </div>
  );
}
